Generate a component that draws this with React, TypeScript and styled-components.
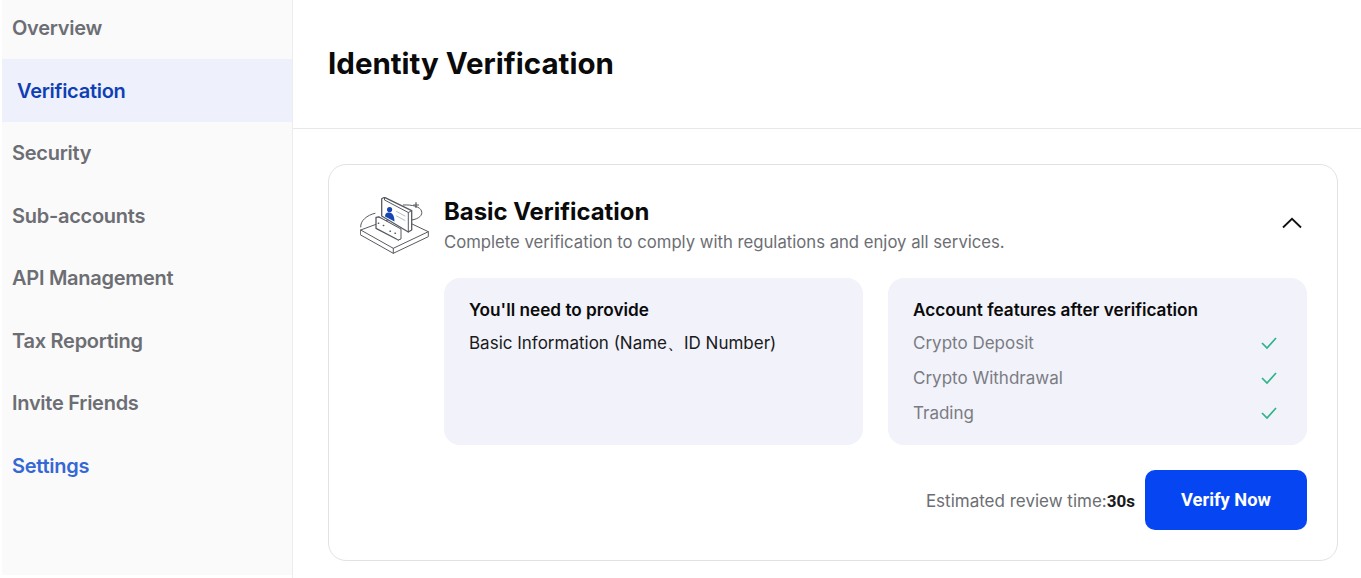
import React from 'react'
import styled, { createGlobalStyle } from 'styled-components'

const GlobalStyle = createGlobalStyle`
  html, body {
    margin: 0;
    padding: 0;
    height: 100%;
    background: #fff;
    overflow: hidden;
  }
  * { box-sizing: border-box; }
  body { font-family: 'Inter', 'Liberation Sans', sans-serif; }
`

const navItems = [
  'Overview',
  'Verification',
  'Security',
  'Sub-accounts',
  'API Management',
  'Tax Reporting',
  'Invite Friends',
  'Settings',
]

const features = ['Crypto Deposit', 'Crypto Withdrawal', 'Trading']

const VerifyIllustration = () => (
  <svg width="70" height="58" viewBox="0 0 70 58" fill="none" stroke="#565a61" strokeWidth="1" strokeLinejoin="round" strokeLinecap="round">
    {/* base plate */}
    <path d="M0.7 33 L36.7 19.7 L68.3 34.7 L68.3 39.7 L33.3 56.3 L0.7 38 Z" fill="#fff" />
    <path d="M0.7 33 L33.3 51.3 L68.3 34.7 M33.3 51.3 L33.3 56.3" />
    {/* orbit arcs */}
    <path d="M0.7 30 C0 24 7 18 15 16.3" />
    <path d="M51.7 23 C59 22 63 18 61.5 14 C60 9.5 52 7.5 43.3 8" />
    {/* id card at the back */}
    <path d="M21.7 1.8 L24.5 0.3 L51.7 13.7 L51.7 33 L48.3 35 L21.7 19 Z" fill="#fff" strokeWidth="1.3" />
    <path d="M24.5 0.3 L24.5 3 L48.3 15.5 L51.7 13.7 M48.3 15.5 L48.3 35" />
    <circle cx="29.6" cy="12.6" r="2.6" fill="#1646b4" stroke="none" />
    <path d="M25 19.5 C25 16 27 15 29.5 15.5 C32.5 16 34.5 18.5 34.5 24.5 Z" fill="#1646b4" stroke="none" />
    <path d="M36.5 14.5 L45 19 M36.5 19 L45 23.5" stroke="#b9bdc5" />
    {/* envelope in front */}
    <path d="M16 20.3 L19 20 L38.3 31.3 L38.3 43 L16 31.3 Z" fill="#fff" strokeWidth="1.3" />
    <path d="M19 20 L41 32 L41 42 L38.3 43" fill="#fff" />
    <path d="M18.3 26.3 h.4 M23.3 28.4 h.4 M30 34.2 h.4 M35 36.3 h.4" strokeWidth="1.5" />
    {/* spark */}
    <path d="M56 5.5 L56 10.5 M53.5 8 L58.5 8" strokeWidth="1.2" />
  </svg>
)

const Chevron = () => (
  <svg width="20" height="12" viewBox="0 0 20 12" fill="none" stroke="#111" strokeWidth="1.8">
    <path d="M1 10.5 L10 1.8 L19 10.5" />
  </svg>
)

const Check = () => (
  <svg width="16" height="14" viewBox="0 0 16 14" fill="none" stroke="#2eb389" strokeWidth="1.7">
    <path d="M1 7 L6 12 L15 2" />
  </svg>
)

const App: React.FC = () => {
  return (
    <Page>
      <GlobalStyle />
      <Sidebar>
        <NavList>
          {navItems.map((item) => (
            <NavItem key={item} $active={item === 'Verification'} $link={item === 'Settings'}>
              {item}
            </NavItem>
          ))}
        </NavList>
      </Sidebar>
      <Main>
        <Header>
          <PageTitle>Identity Verification</PageTitle>
        </Header>
        <Content>
          <Card>
            <CardTop>
              <IllustrationBox>
                <VerifyIllustration />
              </IllustrationBox>
              <CardHeading>
                <CardTitle>Basic Verification</CardTitle>
                <CardSubtitle>Complete verification to comply with regulations and enjoy all services.</CardSubtitle>
              </CardHeading>
              <ChevronBox>
                <Chevron />
              </ChevronBox>
            </CardTop>
            <Panels>
              <Panel>
                <PanelTitle>You'll need to provide</PanelTitle>
                <PanelText>Basic Information (Name、ID Number)</PanelText>
              </Panel>
              <Panel>
                <PanelTitle>Account features after verification</PanelTitle>
                <FeatureList>
                  {features.map((f) => (
                    <FeatureRow key={f}>
                      {f}
                      <Check />
                    </FeatureRow>
                  ))}
                </FeatureList>
              </Panel>
            </Panels>
            <CardFooter>
              <Estimate>
                Estimated review time:<EstimateValue>30s</EstimateValue>
              </Estimate>
              <VerifyButton>Verify Now</VerifyButton>
            </CardFooter>
          </Card>
        </Content>
      </Main>
    </Page>
  )
}
export default App

const Page = styled.div`
  display: flex;
  width: 1361px;
  height: 578px;
  overflow: hidden;
  background: #fff;
`

const Sidebar = styled.aside`
  width: 293px;
  flex-shrink: 0;
  padding-left: 2px;
  background: #fff;
  border-right: 1px solid #ececee;
`

const NavList = styled.nav`
  height: 100%;
  background: #fafafb;
  margin-top: -3.2px;
  padding-bottom: 3.2px;
`

const NavItem = styled.div<{ $active?: boolean; $link?: boolean }>`
  height: 62.5px;
  display: flex;
  align-items: center;
  padding-left: ${(p) => (p.$active ? '15px' : '10px')};
  font-size: 20px;
  font-weight: 600;
  letter-spacing: -0.27px;
  color: ${(p) => (p.$active ? '#0f3fb5' : p.$link ? '#3568d4' : '#6c6e73')};
  background: ${(p) => (p.$active ? '#eef1fb' : 'transparent')};
`

const Main = styled.main`
  flex: 1;
  min-width: 0;
`

const Header = styled.header`
  height: 129px;
  padding: 0 0 2px 35px;
  display: flex;
  align-items: center;
  border-bottom: 1px solid #e8e8ea;
`

const PageTitle = styled.h1`
  margin: 0;
  font-size: 29.5px;
  font-weight: 700;
  color: #0a0a0a;
`

const Content = styled.div`
  padding: 35px 23px 0 35px;
`

const Card = styled.section`
  height: 397px;
  border: 1px solid #e2e2e4;
  border-radius: 18px;
  padding: 29px 30px 0 31px;
`

const CardTop = styled.div`
  display: flex;
  align-items: flex-start;
`

const IllustrationBox = styled.div`
  width: 84px;
  height: 62px;
  flex-shrink: 0;
  padding-top: 3px;
`

const CardHeading = styled.div`
  flex: 1;
  padding-top: 1px;
`

const CardTitle = styled.h2`
  margin: 0;
  font-size: 23.9px;
  font-weight: 700;
  line-height: 34px;
  color: #0a0a0a;
`

const CardSubtitle = styled.p`
  margin: 1px 0 0;
  font-size: 16.7px;
  line-height: 24px;
  color: #6c6e73;
`

const ChevronBox = styled.div`
  width: 20px;
  margin: 19px 5px 0 0;
`

const Panels = styled.div`
  display: grid;
  grid-template-columns: 419px 419px;
  gap: 25px;
  margin: 22px 0 0 84px;
`

const Panel = styled.div`
  height: 167px;
  background: #f1f2fa;
  border-radius: 16px;
  padding: 20px 25px 0;
`

const PanelTitle = styled.div`
  font-size: 17.2px;
  font-weight: 600;
  line-height: 24px;
  color: #0a0a0a;
`

const PanelText = styled.div`
  margin-top: 9px;
  font-size: 17px;
  line-height: 24px;
  color: #1a1a1a;
`

const FeatureList = styled.div`
  margin-top: 3px;
`

const FeatureRow = styled.div`
  display: flex;
  align-items: center;
  justify-content: space-between;
  height: 35px;
  padding-right: 5px;
  font-size: 17px;
  color: #7a7c82;
`

const CardFooter = styled.div`
  display: flex;
  align-items: center;
  justify-content: flex-end;
  gap: 10px;
  margin-top: 25px;
`

const Estimate = styled.div`
  padding-top: 2px;
  font-size: 17px;
  color: #6c6e73;
`

const EstimateValue = styled.span`
  font-family: 'Roboto', 'Liberation Sans', sans-serif;
  font-weight: 700;
  color: #1a1a1a;
`

const VerifyButton = styled.button`
  width: 162px;
  height: 60px;
  border: none;
  border-radius: 10px;
  padding: 0 0 2px;
  background: #0646f2;
  color: #fff;
  font-family: 'Roboto', 'Liberation Sans', sans-serif;
  font-size: 18.3px;
  font-weight: 700;
`
